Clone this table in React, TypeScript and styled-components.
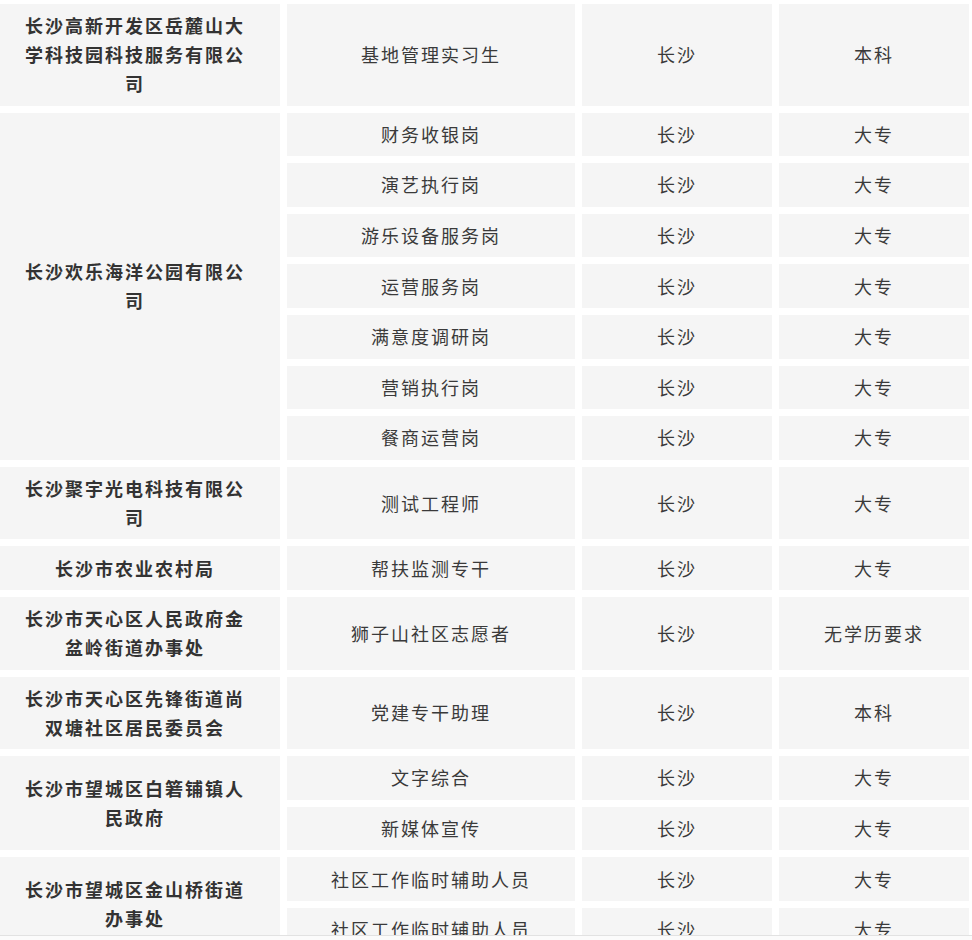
import React from "react";
import styled, { createGlobalStyle } from "styled-components";

const Global = createGlobalStyle`
  html, body {
    margin: 0;
    padding: 0;
    overflow: hidden;
    background: #ffffff;
  }
  body {
    font-family: "Noto Sans CJK SC", "Noto Sans", sans-serif;
    color: #333333;
  }
`;

const Page = styled.div`
  width: 972px;
  height: 940px;
  overflow: hidden;
  position: relative;
`;

const Table = styled.table`
  border-collapse: separate;
  border-spacing: 7px;
  table-layout: fixed;
  width: 993px;
  margin: -3px 0 0 -17px;
`;

const Col = styled.col<{ $w: number }>`
  width: ${(p) => p.$w}px;
`;

const Cell = styled.td<{ $bold?: boolean }>`
  background: #f5f5f5;
  padding: 7.3px 28px;
  text-align: center;
  vertical-align: middle;
  font-size: 18px;
  line-height: 29px;
  letter-spacing: 2px;
  font-weight: ${(p) => (p.$bold ? 700 : 400)};
  color: ${(p) => (p.$bold ? "#333333" : "#3a3a3a")};
  word-break: break-all;
`;

const BottomEdge = styled.div`
  position: fixed;
  left: 0;
  right: 0;
  bottom: 0;
  height: 4px;
  background: #fbfbfb;
  border-top: 1px solid #e2e2e2;
`;

type Job = { title: string; city: string; edu: string };
type Group = { company: string; jobs: Job[] };

const groups: Group[] = [
  {
    company: "长沙高新开发区岳麓山大学科技园科技服务有限公司",
    jobs: [{ title: "基地管理实习生", city: "长沙", edu: "本科" }],
  },
  {
    company: "长沙欢乐海洋公园有限公司",
    jobs: [
      { title: "财务收银岗", city: "长沙", edu: "大专" },
      { title: "演艺执行岗", city: "长沙", edu: "大专" },
      { title: "游乐设备服务岗", city: "长沙", edu: "大专" },
      { title: "运营服务岗", city: "长沙", edu: "大专" },
      { title: "满意度调研岗", city: "长沙", edu: "大专" },
      { title: "营销执行岗", city: "长沙", edu: "大专" },
      { title: "餐商运营岗", city: "长沙", edu: "大专" },
    ],
  },
  {
    company: "长沙聚宇光电科技有限公司",
    jobs: [{ title: "测试工程师", city: "长沙", edu: "大专" }],
  },
  {
    company: "长沙市农业农村局",
    jobs: [{ title: "帮扶监测专干", city: "长沙", edu: "大专" }],
  },
  {
    company: "长沙市天心区人民政府金盆岭街道办事处",
    jobs: [{ title: "狮子山社区志愿者", city: "长沙", edu: "无学历要求" }],
  },
  {
    company: "长沙市天心区先锋街道尚双塘社区居民委员会",
    jobs: [{ title: "党建专干助理", city: "长沙", edu: "本科" }],
  },
  {
    company: "长沙市望城区白箬铺镇人民政府",
    jobs: [
      { title: "文字综合", city: "长沙", edu: "大专" },
      { title: "新媒体宣传", city: "长沙", edu: "大专" },
    ],
  },
  {
    company: "长沙市望城区金山桥街道办事处",
    jobs: [
      { title: "社区工作临时辅助人员", city: "长沙", edu: "大专" },
      { title: "社区工作临时辅助人员", city: "长沙", edu: "大专" },
    ],
  },
];

const widths = [290, 288, 190, 190];

export default function App() {
  return (
    <Page>
      <Global />
      <Table>
        <colgroup>
          {widths.map((w, i) => (
            <Col key={i} $w={w} />
          ))}
        </colgroup>
        <tbody>
          {groups.map((g, gi) =>
            g.jobs.map((j, ji) => (
              <tr key={`${gi}-${ji}`}>
                {ji === 0 && (
                  <Cell $bold rowSpan={g.jobs.length}>
                    {g.company}
                  </Cell>
                )}
                <Cell>{j.title}</Cell>
                <Cell>{j.city}</Cell>
                <Cell>{j.edu}</Cell>
              </tr>
            ))
          )}
        </tbody>
      </Table>
      <BottomEdge />
    </Page>
  );
}
